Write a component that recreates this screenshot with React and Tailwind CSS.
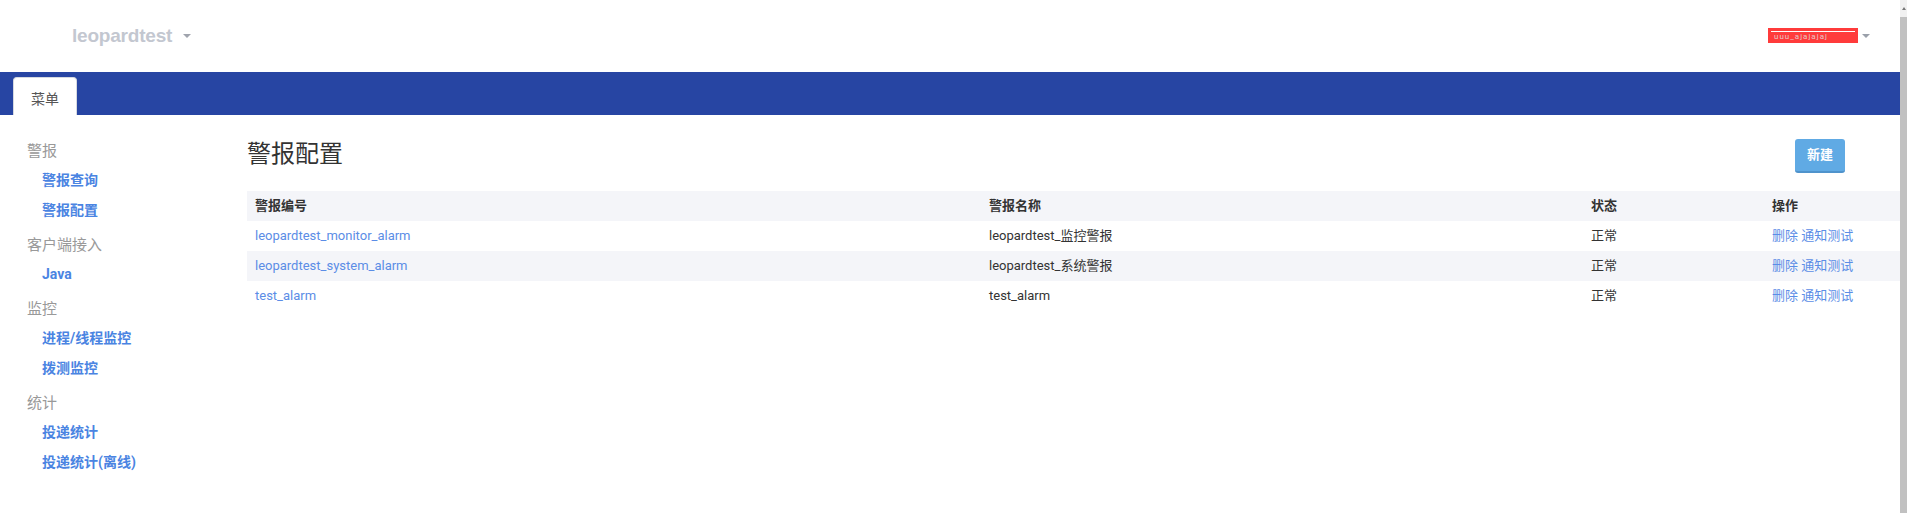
import React from "react";

const font = { fontFamily: '"Roboto", "Noto Sans CJK SC", sans-serif' };

const menu = [
  { title: "警报", items: ["警报查询", "警报配置"] },
  { title: "客户端接入", items: ["Java"] },
  { title: "监控", items: ["进程/线程监控", "拨测监控"] },
  { title: "统计", items: ["投递统计", "投递统计(离线)"] },
];

const rows = [
  { id: "leopardtest_monitor_alarm", name: "leopardtest_监控警报" },
  { id: "leopardtest_system_alarm", name: "leopardtest_系统警报" },
  { id: "test_alarm", name: "test_alarm" },
];

const Caret = ({ color = "border-t-[#a0a4ad]" }) => (
  <span
    className={`inline-block w-0 h-0 border-l-[4px] border-r-[4px] border-t-[4px] border-l-transparent border-r-transparent ${color}`}
  />
);

const App = () => {
  return (
    <div className="flex w-[1907px] h-[513px] bg-white overflow-hidden" style={font}>
      <div className="flex-1 flex flex-col min-w-0">
        {/* HEADER */}
        <div className="h-[72px] flex items-center justify-between pl-[72px] pr-[30px]">
          <div className="flex items-center gap-[11px]">
            <span
              className="text-[19px] font-bold text-[#c3c7d0] tracking-[-0.2px]"
              style={{ fontFamily: '"Liberation Sans", Arial, sans-serif' }}
            >
              leopardtest
            </span>
            <Caret />
          </div>
          <div className="flex items-center gap-[4px] mt-[-1px]">
            <div className="w-[90px] h-[15px] bg-[#ff3b3b] flex flex-col px-[3px] pt-[3px]">
              <div className="h-[1px] bg-white" />
              <div className="h-[7px] mt-[1px] flex items-center overflow-hidden">
                <span className="text-[8px] leading-none text-[#e8c4c4] pl-[3px] tracking-[1px]">uuu_ajajajaj</span>
              </div>
            </div>
            <Caret color="border-t-[#9aa0aa]" />
          </div>
        </div>
        {/* MENU BAR */}
        <div className="h-[43px] bg-[#2745a3] flex items-end pl-[13px]">
          <div className="w-[64px] h-[38px] bg-white rounded-t-[4px] border border-b-0 border-[#d6d9e0] flex items-center justify-center pt-[6px]">
            <span className="text-[14px] text-[#555]">菜单</span>
          </div>
        </div>
        {/* BODY */}
        <div className="flex flex-1">
          <div className="w-[247px] pl-[27px] pt-[23px] flex flex-col gap-[7px]">
            {menu.map((sec) => (
              <div key={sec.title}>
                <div className="h-[27px] leading-[27px] text-[15px] text-[#999]">{sec.title}</div>
                {sec.items.map((it) => (
                  <div
                    key={it}
                    className="h-[30px] leading-[30px] pl-[15px] text-[14px] font-bold text-[#4a84e2]"
                  >
                    {it}
                  </div>
                ))}
              </div>
            ))}
          </div>
          <div className="flex-1 pt-[22px]">
            <div className="flex justify-between items-start">
              <h1 className="text-[24px] leading-[34px] text-[#333]">警报配置</h1>
              <button
                type="button"
                className="mt-[2px] mr-[55px] w-[50px] h-[34px] rounded-[3px] bg-[#60aae4] border-b-2 border-[#4f93cc] text-white text-[13px] font-bold"
              >
                新建
              </button>
            </div>
            <table className="w-full mt-[18px] text-[13px] text-[#333] border-collapse">
              <thead>
                <tr className="bg-[#f4f5f9] h-[30px]">
                  <th className="text-left font-bold pl-[8px] w-[734px]">警报编号</th>
                  <th className="text-left font-bold pl-[8px] w-[602px]">警报名称</th>
                  <th className="text-left font-bold pl-[8px] w-[181px]">状态</th>
                  <th className="text-left font-bold pl-[8px]">操作</th>
                </tr>
              </thead>
              <tbody>
                {rows.map((r, i) => (
                  <tr key={r.id} className={`h-[30px] ${i % 2 === 1 ? "bg-[#f4f5f9]" : "bg-white"}`}>
                    <td className="pl-[8px] text-[#5b8de6]">{r.id}</td>
                    <td className="pl-[8px]">{r.name}</td>
                    <td className="pl-[8px]">正常</td>
                    <td className="pl-[8px] text-[#5b8de6]">删除 通知测试</td>
                  </tr>
                ))}
              </tbody>
            </table>
          </div>
        </div>
      </div>
      {/* SCROLLBAR */}
      <div className="w-[7px] h-[513px] flex flex-col bg-[#f1f1f1]">
        <div className="h-[17px] flex items-center justify-center">
          <span className="inline-block w-0 h-0 border-l-[2px] border-r-[2px] border-b-[3px] border-l-transparent border-r-transparent border-b-[#777]" />
        </div>
        <div className="flex-1 bg-[#c1c1c1]" />
      </div>
    </div>
  );
};

export default App;
